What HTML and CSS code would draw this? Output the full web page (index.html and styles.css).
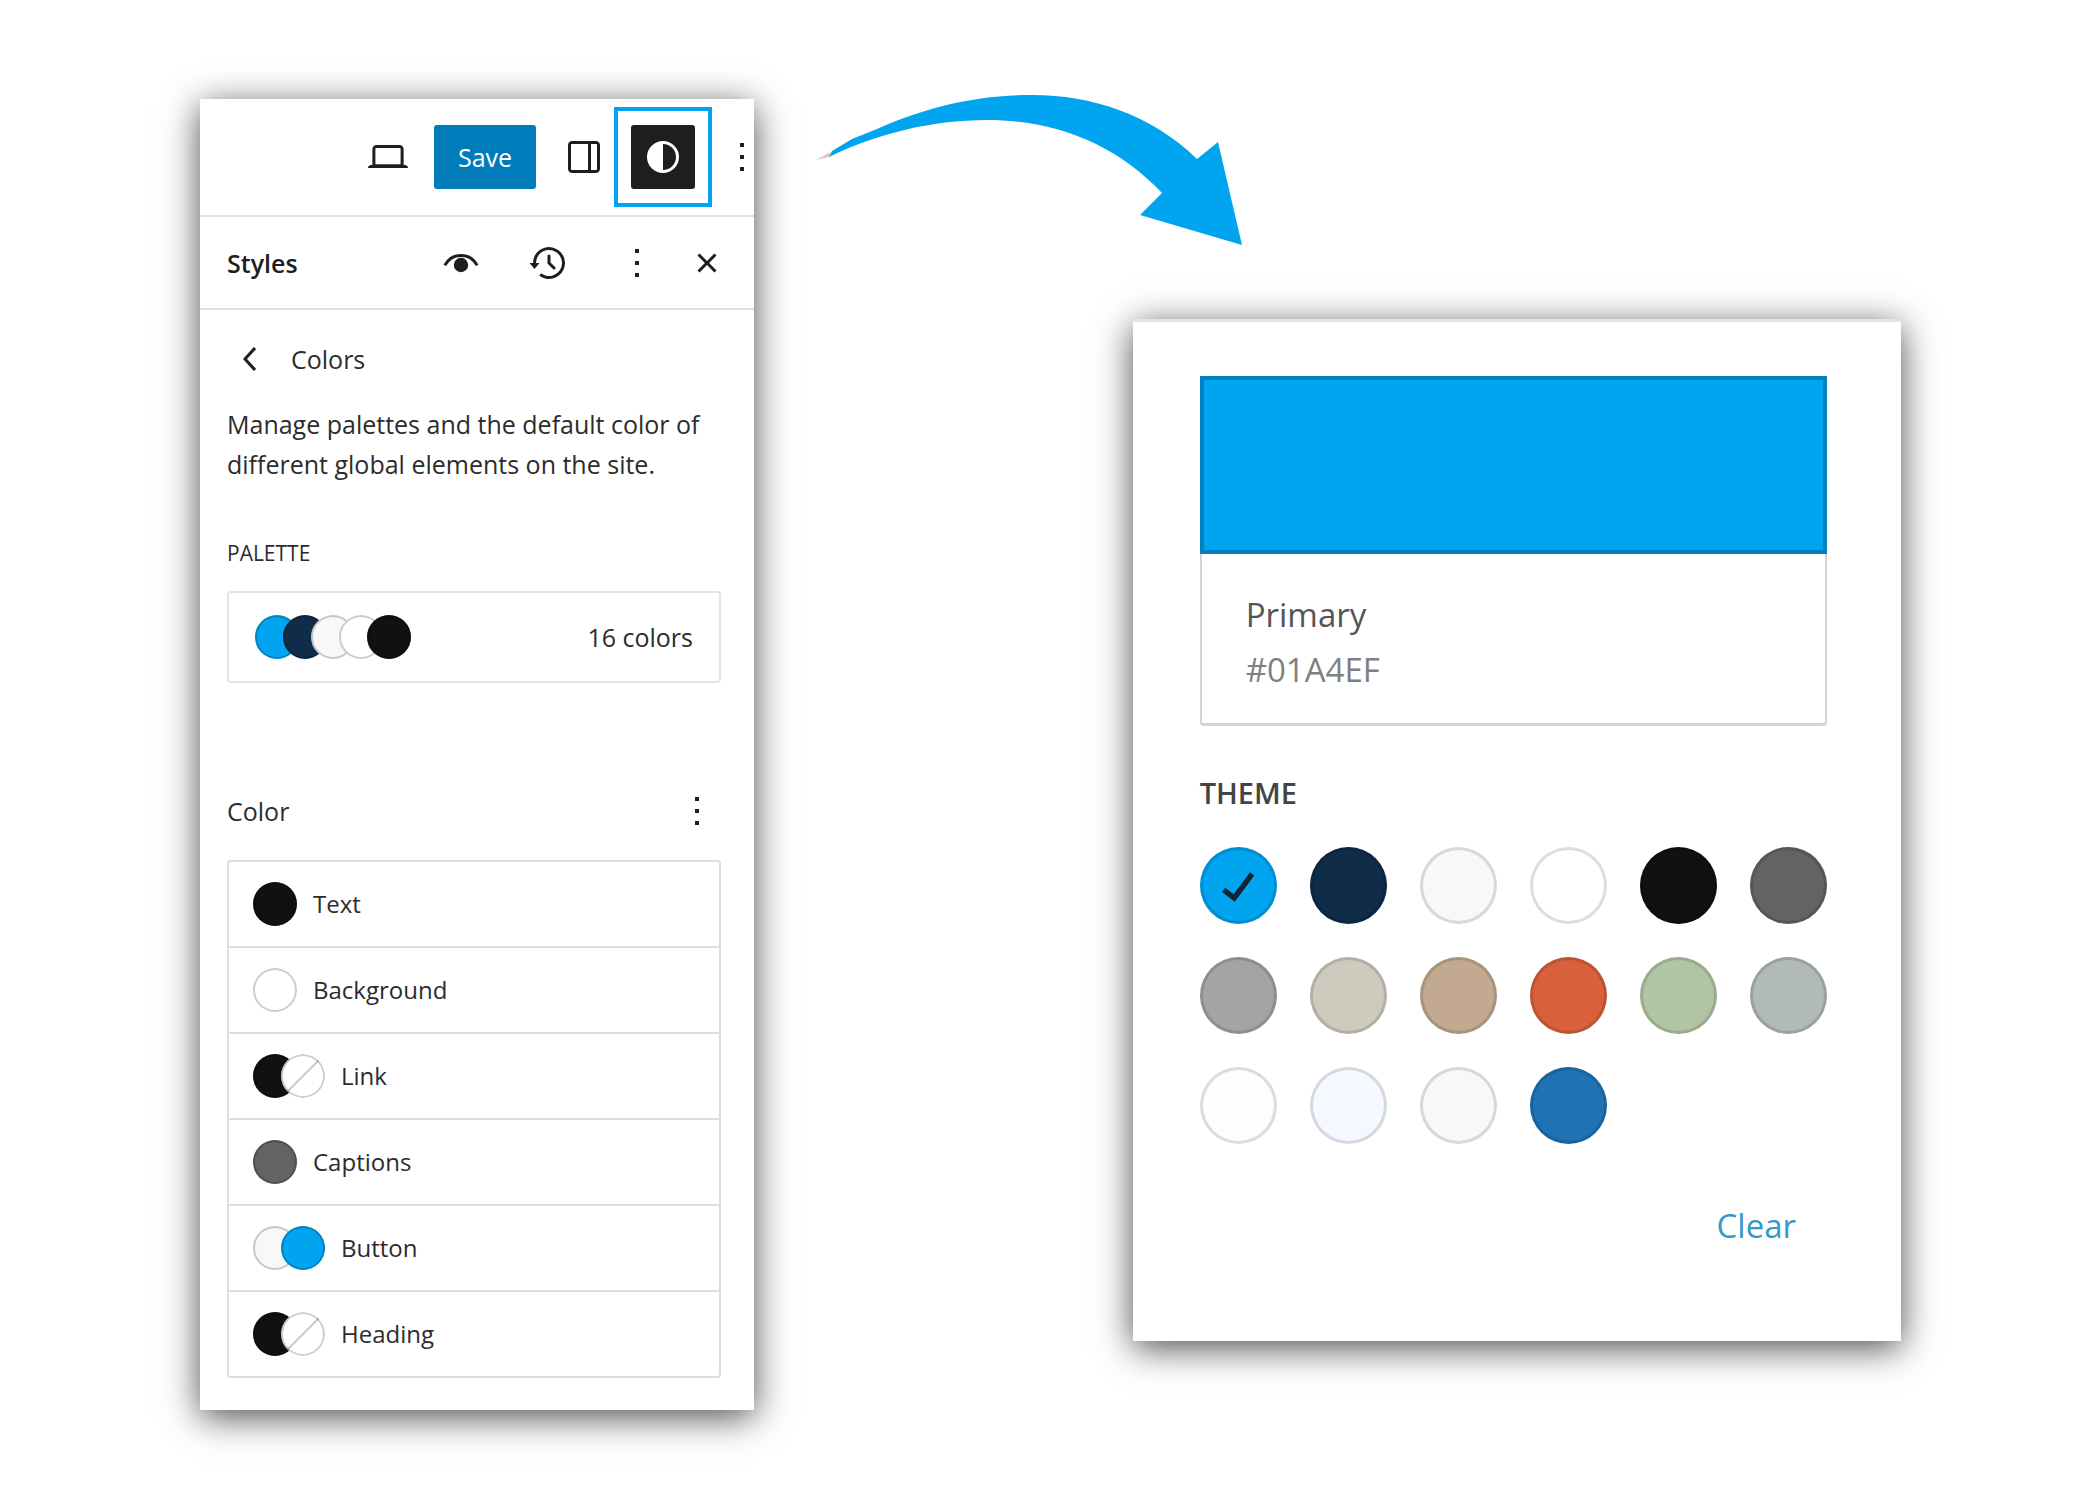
FILE: index.html
```html
<!DOCTYPE html>
<html lang="en">
<head>
  <meta charset="UTF-8">
  <title>Styles – Colors</title>
  <meta name="viewport" content="width=device-width, initial-scale=1.0">
  <link rel="stylesheet" href="styles.css">
</head>
<body>
  <main class="stage">
    <section class="panel sidebar">
      <header class="toolbar">
        <button class="icon-btn" aria-label="View">
          <svg viewBox="0 0 24 24"><path d="M20.5 16h-.7V8c0-1.1-.9-2-2-2H6.2c-1.1 0-2 .9-2 2v8h-.7c-.8 0-1.5.7-1.5 1.5h20c0-.8-.7-1.5-1.5-1.5zM5.7 8c0-.3.2-.5.5-.5h11.6c.3 0 .5.2.5.5v7.6H5.7V8z"/></svg>
        </button>
        <button class="save-btn">Save</button>
        <button class="icon-btn" aria-label="Settings">
          <svg viewBox="0 0 24 24"><path fill-rule="evenodd" d="M18 4H6c-1.1 0-2 .9-2 2v12c0 1.1.9 2 2 2h12c1.1 0 2-.9 2-2V6c0-1.1-.9-2-2-2zm-4 14.5H6c-.3 0-.5-.2-.5-.5V6c0-.3.2-.5.5-.5h8v13zm4.5-.5c0 .3-.2.5-.5.5h-2.5v-13H18c.3 0 .5.2.5.5v12z"/></svg>
        </button>
        <div class="highlight">
          <button class="icon-btn styles-btn" aria-label="Styles">
            <svg viewBox="0 0 24 24"><path fill-rule="evenodd" d="M20 12a8 8 0 1 1-16 0 8 8 0 0 1 16 0Zm-1.5 0a6.5 6.5 0 0 1-6.5 6.5v-13a6.5 6.5 0 0 1 6.5 6.5Z"/></svg>
          </button>
        </div>
        <button class="icon-btn cut-off" aria-label="Options">
          <svg viewBox="0 0 24 24"><path d="M13 19h-2v-2h2v2zm0-6h-2v-2h2v2zm0-6h-2V5h2v2z"/></svg>
        </button>
      </header>

      <div class="panel-title">
        <h1>Styles</h1>
        <button class="icon-btn" aria-label="Style book">
          <svg viewBox="0 0 24 24"><path fill="none" stroke="currentColor" stroke-width="1.5" d="M3.9 13.2C5.6 10 8.400 8.200 12 8.200s6.400 1.800 8.100 5"/><circle cx="12" cy="13" r="3.600"/></svg>
        </button>
        <button class="icon-btn" aria-label="Revisions">
          <svg viewBox="0 0 24 24"><path d="M5.5 12h1.75l-2.5 3-2.5-3H4a8 8 0 113.134 6.35l.907-1.194A6.5 6.5 0 105.5 12zm9.53 1.97l-2.28-2.28V8.5a.75.75 0 00-1.5 0V12a.747.747 0 00.218.529l1.282-.84-1.28.842 2.5 2.5a.75.75 0 101.06-1.061z"/></svg>
        </button>
        <div class="title-end">
          <button class="icon-btn" aria-label="More">
            <svg viewBox="0 0 24 24"><path d="M13 19h-2v-2h2v2zm0-6h-2v-2h2v2zm0-6h-2V5h2v2z"/></svg>
          </button>
          <button class="icon-btn" aria-label="Close">
            <svg viewBox="0 0 24 24"><path d="M12 13.06l3.712 3.713 1.061-1.06L13.061 12l3.712-3.712-1.06-1.06L12 10.938 8.288 7.227l-1.061 1.06L10.939 12l-3.712 3.712 1.06 1.061L12 13.061z"/></svg>
          </button>
        </div>
      </div>

      <div class="panel-body">
        <div class="back-row">
          <button class="icon-btn" aria-label="Back">
            <svg viewBox="0 0 24 24"><path d="M14.6 7l-1.2-1L8 12l5.4 6 1.2-1-4.6-5z"/></svg>
          </button>
          <h2>Colors</h2>
        </div>
        <p class="intro">Manage palettes and the default color of different global elements on the site.</p>

        <h3 class="section-label">PALETTE</h3>
        <button class="palette-btn">
          <span class="dots">
            <span class="dot primary"></span>
            <span class="dot navy"></span>
            <span class="dot light"></span>
            <span class="dot white"></span>
            <span class="dot black"></span>
          </span>
          <span>16 colors</span>
        </button>

        <div class="color-head">
          <h2>Color</h2>
          <button class="icon-btn" aria-label="Color options">
            <svg viewBox="0 0 24 24"><path d="M13 19h-2v-2h2v2zm0-6h-2v-2h2v2zm0-6h-2V5h2v2z"/></svg>
          </button>
        </div>
        <ul class="color-list">
          <li><button><span class="dots"><span class="dot black"></span></span>Text</button></li>
          <li><button><span class="dots"><span class="dot white"></span></span>Background</button></li>
          <li><button><span class="dots"><span class="dot black"></span><span class="dot none"></span></span>Link</button></li>
          <li><button><span class="dots"><span class="dot gray"></span></span>Captions</button></li>
          <li><button><span class="dots"><span class="dot light"></span><span class="dot primary"></span></span>Button</button></li>
          <li><button><span class="dots"><span class="dot black"></span><span class="dot none"></span></span>Heading</button></li>
        </ul>
      </div>
    </section>

    <div class="right-side">
      <svg class="arrow" viewBox="0 0 426 152" aria-hidden="true">
        <path class="arrow-tail" d="M0 66L14 58L14 63Z"/>
        <path d="M13 63L16 57L36 45L61 35C111 13 160 1 217 1C275 1 335 20 381 65L402 48L426 151L324 121L346 99C300 50 240 26 171 26C115 26 60 40 13 63Z"/>
      </svg>

      <section class="panel picker">
        <div class="color-card">
          <button class="color-preview" aria-label="Custom color picker"></button>
          <div class="color-info">
            <p>Primary</p>
            <p class="hex">#01A4EF</p>
          </div>
        </div>

        <h3 class="theme-label">THEME</h3>
        <div class="swatches">
          <button class="dot primary" aria-label="Primary">
            <svg viewBox="0 0 24 24"><path d="M16.7 7.1l-6.3 8.5-3.3-2.5-.9 1.2 4.5 3.400L17.900 8z"/></svg>
          </button>
          <button class="dot navy" aria-label="Navy"></button>
          <button class="dot light" aria-label="Light"></button>
          <button class="dot white" aria-label="White"></button>
          <button class="dot black" aria-label="Black"></button>
          <button class="dot gray" aria-label="Gray"></button>
          <button class="dot silver" aria-label="Silver"></button>
          <button class="dot stone" aria-label="Stone"></button>
          <button class="dot tan" aria-label="Tan"></button>
          <button class="dot orange" aria-label="Orange"></button>
          <button class="dot green" aria-label="Green"></button>
          <button class="dot mist" aria-label="Mist"></button>
          <button class="dot snow" aria-label="Snow"></button>
          <button class="dot ice" aria-label="Ice"></button>
          <button class="dot light" aria-label="Light gray"></button>
          <button class="dot blue" aria-label="Blue"></button>
        </div>
        <button class="clear-btn">Clear</button>
      </section>
    </div>
  </main>
</body>
</html>
```

FILE: styles.css
```css
* {
  box-sizing: border-box;
}

body {
  margin: 0;
  background: #fff;
  color: #2c2c2c;
  font-family: "Open Sans", "Noto Sans", sans-serif;
  font-size: 25px;
  line-height: 40px;
}

h1, h2, h3, p, ul {
  margin: 0;
  padding: 0;
}

h1, h2 {
  font-size: 25px;
  font-weight: 400;
}

h1 {
  color: #1e1e1e;
  font-weight: 600;
}

button {
  padding: 0;
  border: 0;
  background: none;
  color: inherit;
  font: inherit;
  cursor: pointer;
}

.stage {
  display: grid;
  grid-template-columns: 554fr 1085fr;
  gap: 62px;
  align-items: start;
  padding: 94px 199px 80px 200px;
}

.panel {
  background: #fff;
  box-shadow: 0 7px 34px rgba(0, 0, 0, 0.7);
}

/* left panel */
.sidebar {
  margin-top: 5px;
  overflow: hidden;
}

.icon-btn {
  flex: none;
  width: 48px;
  height: 48px;
  color: #1e1e1e;
}

.icon-btn svg {
  display: block;
  width: 48px;
  height: 48px;
  margin: auto;
  fill: currentColor;
}

.toolbar {
  display: flex;
  align-items: center;
  justify-content: flex-end;
  gap: 6px;
  height: 118px;
  border-bottom: 2px solid #e0e0e0;
}

.save-btn {
  width: 102px;
  height: 64px;
  margin: 0 18px 0 16px;
  border-radius: 3px;
  background: #007cba;
  color: #fff;
}

.highlight {
  padding: 14px 13px;
  border: 4px solid #01a4ef;
}

.styles-btn {
  display: block;
  width: 64px;
  height: 64px;
  border-radius: 3px;
  background: #1e1e1e;
  color: #fff;
}

.cut-off {
  margin-right: -12px;
}

.panel-title {
  display: flex;
  align-items: center;
  gap: 40px;
  height: 93px;
  padding: 0 23px 0 27px;
  border-bottom: 2px solid #e0e0e0;
}

.panel-title h1 {
  flex: 1;
}

.title-end {
  display: flex;
  gap: 22px;
}

.panel-body {
  padding: 25px 33px 32px 27px;
}

.back-row {
  display: flex;
  align-items: center;
  gap: 16px;
}

.intro {
  margin-top: 21px;
}

.section-label {
  margin: 54px 0 23px;
  font-size: 21px;
  font-weight: 500;
  line-height: 30px;
}

.palette-btn {
  display: flex;
  align-items: center;
  justify-content: space-between;
  width: 100%;
  height: 92px;
  padding: 0 26px;
  border: 2px solid #e4e4e4;
  border-radius: 4px;
}

.color-head {
  display: flex;
  align-items: center;
  justify-content: space-between;
  margin: 104px 0 25px;
}

.color-list {
  border: 2px solid #ddd;
  border-radius: 4px;
  font-size: 24px;
  list-style: none;
}

.color-list li + li {
  border-top: 2px solid #ddd;
}

.color-list button {
  display: flex;
  align-items: center;
  gap: 16px;
  width: 100%;
  height: 84px;
  padding: 0 24px;
}

/* color circles */
.dots {
  display: flex;
}

.dot {
  border-radius: 50%;
  box-shadow: inset 0 0 0 2px rgba(0, 0, 0, 0.2);
}

.dots .dot {
  width: 44px;
  height: 44px;
}

.dots .dot + .dot {
  margin-left: -16px;
}

.primary { background: #01a4ef; }
.navy { background: #0f2c49; }
.light { background: #f8f8f8; }
.white { background: #fff; }
.black { background: #111; }
.gray { background: #636363; }
.silver { background: #a4a4a4; }
.stone { background: #cfcabe; }
.tan { background: #c2a990; }
.orange { background: #d8613c; }
.green { background: #b1c5a4; }
.mist { background: #b1bab9; }
.snow { background: #fdfdfd; }
.ice { background: #f5f9ff; }
.blue { background: #1e73b6; }

.none {
  background: linear-gradient(-45deg, transparent 48%, #ccc 48%, #ccc 52%, transparent 52%) #fff;
}

/* right panel */
.right-side {
  display: flex;
  flex-direction: column;
}

.arrow {
  width: 426px;
  height: 152px;
  margin-bottom: 73px;
  fill: #01a4ef;
}

.arrow-tail {
  fill: #e6c4c6;
}

.picker {
  align-self: flex-end;
  width: calc(71% - 2px);
  padding: 54px 74px 91px 67px;
  border-top: 3px solid #e4e4e4;
  font-size: 33px;
  line-height: 55px;
}

.color-preview {
  display: block;
  width: 100%;
  height: 178px;
  border: 4px solid #0180c0;
  background: #01a4ef;
}

.color-info {
  padding: 33px 44px 26px;
  border: solid #d4d4d4;
  border-width: 0 2px 3px;
  border-radius: 0 0 4px 4px;
  color: #555;
}

.hex {
  color: #808080;
}

.theme-label {
  margin: 47px 0 34px;
  color: #444;
  font-size: 29px;
  font-weight: 600;
  line-height: 40px;
}

.swatches {
  display: grid;
  grid-template-columns: repeat(6, 1fr);
  gap: 33px;
}

.swatches .dot {
  aspect-ratio: 1;
  box-shadow: inset 0 0 0 3px rgba(0, 0, 0, 0.13);
}

.swatches svg {
  display: block;
  width: 62px;
  margin: auto;
  fill: #0f2437;
  stroke: #0f2437;
  stroke-width: 0.6;
}

.clear-btn {
  display: block;
  margin: 58px 31px 0 auto;
  color: #3599cb;
  line-height: 48px;
}
```
